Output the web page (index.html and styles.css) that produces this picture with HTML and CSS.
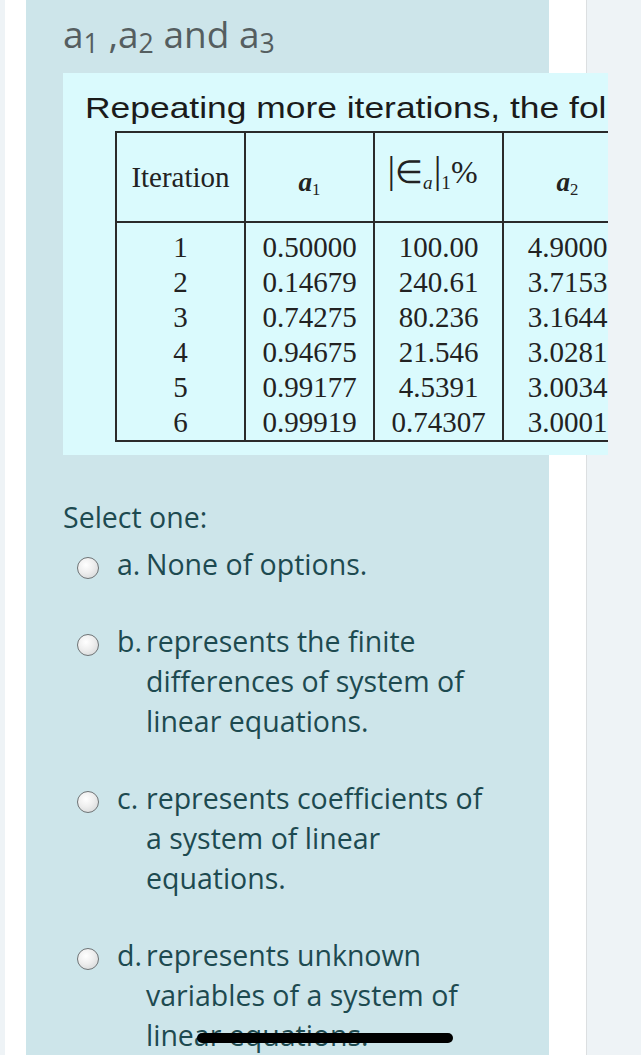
FILE: index.html
```html
<!DOCTYPE html>
<html lang="en">
<head>
<meta charset="utf-8">
<title>Question</title>
<link rel="stylesheet" href="styles.css">
</head>
<body>
<div class="frame">
  <main class="panel">
    <h2 class="qhead">a<sub>1</sub> ,a<sub>2</sub> and a<sub>3</sub></h2>
    <div class="figure">
      <p class="caption">Repeating more iterations, the fol</p>
      <table class="iter">
        <colgroup><col><col><col><col></colgroup>
        <thead>
          <tr>
            <th>Iteration</th>
            <th><i class="var">a<sub>1</sub></i></th>
            <th><span class="err"><span class="abs">|</span>∈<sub class="ia">a</sub><span class="abs">|</span><sub>1</sub>%</span></th>
            <th><i class="var">a<sub>2</sub></i></th>
          </tr>
        </thead>
        <tbody>
          <tr class="first"><td>1</td><td>0.50000</td><td>100.00</td><td>4.9000</td></tr>
          <tr><td>2</td><td>0.14679</td><td>240.61</td><td>3.7153</td></tr>
          <tr><td>3</td><td>0.74275</td><td>80.236</td><td>3.1644</td></tr>
          <tr><td>4</td><td>0.94675</td><td>21.546</td><td>3.0281</td></tr>
          <tr><td>5</td><td>0.99177</td><td>4.5391</td><td>3.0034</td></tr>
          <tr><td>6</td><td>0.99919</td><td>0.74307</td><td>3.0001</td></tr>
        </tbody>
      </table>
    </div>
    <p class="prompt">Select one:</p>
    <div class="answers">
      <label class="option"><span class="radio"></span><span class="letter">a.</span><span class="text">None of options.</span></label>
      <label class="option"><span class="radio"></span><span class="letter">b.</span><span class="text">represents the finite differences of system of linear equations.</span></label>
      <label class="option"><span class="radio"></span><span class="letter">c.</span><span class="text">represents coefficients of a system of linear equations.</span></label>
      <label class="option"><span class="radio"></span><span class="letter">d.</span><span class="text">represents unknown variables of a system of linear equations.<span class="redact"></span></span></label>
    </div>
  </main>
</div>
</body>
</html>
```

FILE: styles.css
```css
html, body {
  margin: 0;
  padding: 0;
  height: 1055px;
  overflow: hidden;
}
body {
  background: #eef3f6;
}
.frame {
  margin-left: 5px;
  width: 582px;
  box-sizing: border-box;
  padding: 0 37px 0 21px;
  background: #ffffff;
  border-right: 1px solid #dcdfe1;
  min-height: 1055px;
}
.panel {
  display: block;
  background: #cde5ea;
  min-height: 1055px;
  padding: 14px 44px 0 37px;
  box-sizing: border-box;
  font-family: "Open Sans", "Noto Sans", sans-serif;
  color: #1d4a50;
}
.qhead {
  margin: 0;
  font-weight: 400;
  font-size: 37px;
  line-height: 40px;
  color: #555e60;
}
.qhead sub {
  font-size: 0.72em;
  line-height: 0;
  vertical-align: -0.2em;
}
.figure {
  margin-top: 19px;
  width: 545px;
  height: 382px;
  box-sizing: border-box;
  padding-top: 17px;
  background: #dafafd;
  overflow: hidden;
}
.caption {
  margin: 0 0 0 22px;
  font-family: "Liberation Sans", Arial, sans-serif;
  font-size: 30px;
  line-height: 36px;
  color: #1b1b1b;
  white-space: nowrap;
  transform: scaleX(1.18);
  transform-origin: 0 0;
}
.iter {
  margin: 5px 0 0 52px;
  border-collapse: collapse;
  table-layout: fixed;
  width: 516px;
  border: 2px solid #2a2a2a;
  font-family: "Liberation Serif", "Times New Roman", serif;
  color: #222;
}
.iter col {
  width: 129px;
}
.iter th {
  height: 88px;
  padding: 0;
  font-weight: 400;
  font-size: 29px;
  vertical-align: middle;
  text-align: center;
  border: 2px solid #2a2a2a;
}
.iter td {
  padding: 0;
  font-size: 29px;
  line-height: 35px;
  text-align: center;
  border-left: 2px solid #2a2a2a;
  border-right: 2px solid #2a2a2a;
}
.iter tr.first td {
  padding-top: 7px;
}
.var {
  font-weight: 700;
  font-size: 27px;
  position: relative;
  top: 4px;
}
.var sub {
  font-size: 0.62em;
  line-height: 0;
  vertical-align: -0.25em;
  font-style: normal;
  font-weight: 400;
}
.err {
  display: inline-block;
  font-size: 32px;
  line-height: 40px;
  position: relative;
  top: -5px;
  left: -6px;
}
.err .abs {
  font-size: 1.2em;
  line-height: 0;
}
.err sub {
  font-size: 0.6em;
  line-height: 0;
  vertical-align: -0.3em;
}
.err sub.ia {
  font-style: italic;
  margin-right: 1px;
}
.prompt {
  margin: 42px 0 0;
  font-size: 28.5px;
  line-height: 40px;
}
.answers {
  margin-top: 7px;
  display: flex;
  flex-direction: column;
  gap: 37px;
}
.option {
  display: flex;
  align-items: flex-start;
  padding-left: 14px;
  font-size: 28.5px;
  line-height: 40px;
}
.radio {
  flex: none;
  width: 22px;
  height: 22px;
  margin-top: 13px;
  box-sizing: border-box;
  border-radius: 50%;
  border: 1.5px solid #6f7476;
  background: radial-gradient(circle at 40% 35%, #ffffff 0%, #eeeeee 45%, #cfd1d2 100%);
}
.letter {
  flex: none;
  width: 29px;
  margin-left: 18px;
}
.text {
  width: 360px;
  position: relative;
}
.redact {
  position: absolute;
  left: 51px;
  top: 98px;
  width: 256px;
  height: 10px;
  background: #000;
  border-radius: 5px;
}
```
